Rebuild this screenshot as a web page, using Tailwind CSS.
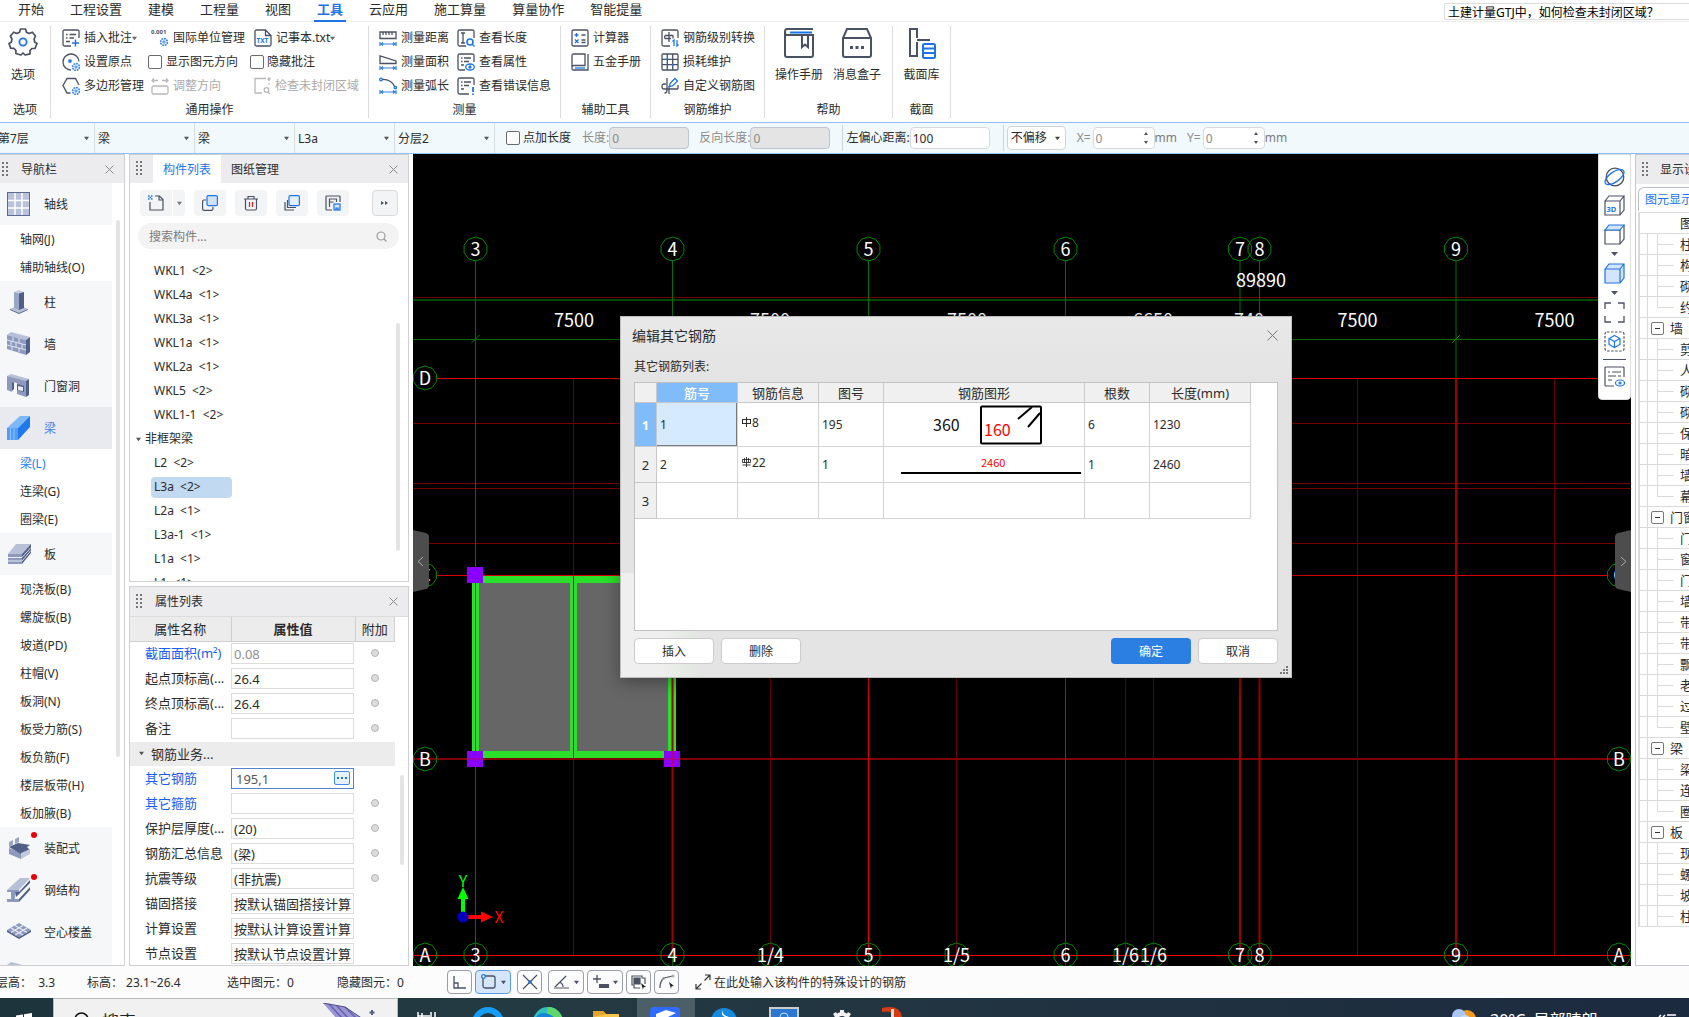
<!DOCTYPE html>
<html lang="zh-CN">
<head>
<meta charset="utf-8">
<title>土建计量</title>
<script src="https://cdn.jsdelivr.net/npm/@tailwindcss/browser@4"></script>
</head>
<body class="flex h-screen w-full flex-col overflow-hidden bg-white font-['Noto_Sans','Noto_Sans_CJK_SC',sans-serif] text-xs leading-4 text-[#2b2b2b]">

<svg class="hidden">
  <defs>
    <g id="cog" fill="none" stroke="#2f80ea" stroke-width="1.2"><circle cx="14" cy="14" r="3.4" stroke-dasharray="1.8 .8" stroke-width="1.6"/><circle cx="14" cy="14" r="1.2" stroke-width="1"/></g>
    <g id="measure" fill="none" stroke="#2f80ea" stroke-width="1.2"><path d="M1 13v4M17 13v4M2 15h14M4 13.5L2 15l2 1.500M14 13.500L16 15l-2 1.500"/></g>
  </defs>
</svg>

<!-- Menu tabs -->
<header class="flex h-[22px] shrink-0 items-start justify-between border-b border-[#ededed]">
  <nav class="flex pl-[5px] text-[13px] leading-[18px]" id="tabs"></nav>
  <label class="mt-[3px] flex"><span class="sr-only">帮助搜索</span>
    <input class="h-[17px] w-[245px] rounded-l-xs border border-r-0 border-[#dcdcdc] pl-[3px] text-xs text-black outline-none" value="土建计量GTJ中，如何检查未封闭区域？"></label>
</header>

<!-- Ribbon -->
<section class="flex h-[100px] shrink-0 whitespace-nowrap pt-1">
  <div class="mb-1 flex w-[51px] flex-col border-r border-[#dcdcdc]">
    <button class="flex h-[72px] shrink-0 flex-col items-center pt-[1px] pr-1">
      <svg class="size-[30px]" viewBox="0 0 30 30" fill="none"><path d="M12.500 2h5l1 3.200 2.600 1.300 3.200-1.300 3.200 3.800-1.400 3 .6 3 2.300 1.500-2 4.800-3.100.2-2 2.200.2 3.100-5 1.200L15 26l-2.100 2-5-1.500v-3l-2-2.200-3.200-.2L1 16.500 3.500 15l.400-3-1.500-3 3.300-3.800 3.200 1.300 2.600-1.300z" stroke="#4a5163" stroke-width="1.700" stroke-linejoin="round"/><circle cx="15" cy="15" r="3.600" stroke="#1d74e8" stroke-width="1.800"/></svg>
      <span class="mt-[10px]">选项</span></button>
    <p class="pt-1 text-center">选项</p>
  </div>

  <div class="mb-1 flex w-[318px] flex-col border-r border-[#dcdcdc]">
    <div class="grid h-[72px] shrink-0 grid-cols-[86px_102px_1fr] grid-rows-3 items-center pl-[11px]">
      <button class="flex items-center gap-1"><svg class="size-[18px]" viewBox="0 0 18 18" fill="none" stroke="#4a5163" stroke-width="1.300"><path d="M17 9V2.500Q17 1 15.500 1h-13Q1 1 1 2.500v13Q1 17 2.500 17H9M4 5.500h1.500M7.500 5.500H14M4 9h1.500M7.500 9H12M4 12.500h4"/><path d="M13.500 10.500v7M10 14h7" stroke="#1d74e8" stroke-width="1.500"/></svg>插入批注<svg class="-ml-1 size-[5px]" viewBox="0 0 6 6"><path d="M0 1h6L3 5z" fill="#666"/></svg></button>
      <button class="flex items-center gap-1 pl-[3px]"><svg class="size-[18px]" viewBox="0 0 18 18"><text x="0" y="5" font-size="6" font-weight="700" fill="#4a5163">0.001</text><use href="#cog" x="-1" y="-1"/></svg>国际单位管理</button>
      <button class="flex items-center gap-1 pl-1"><svg class="size-[18px]" viewBox="0 0 18 18" fill="none" stroke="#4a5163" stroke-width="1.300"><path d="M11.500 1H2.500Q1 1 1 2.500v13Q1 17 2.500 17h13Q17 17 17 15.500V6.500zM11.500 1v5.500H17"/><text x="2.500" y="14" font-size="6.500" font-weight="700" fill="#1d74e8" stroke="none">TXT</text></svg>记事本.txt<svg class="-ml-1 size-[5px]" viewBox="0 0 6 6"><path d="M0 1h6L3 5z" fill="#666"/></svg></button>
      <button class="flex items-center gap-1"><svg class="size-[18px]" viewBox="0 0 18 18" fill="none" stroke="#4a5163" stroke-width="1.300"><path d="M9 17A8 8 0 1 1 17 8.500"/><circle cx="8" cy="8" r="1.200" fill="#1d74e8" stroke="#1d74e8"/><use href="#cog"/></svg>设置原点</button>
      <label class="flex items-center gap-1"><input type="checkbox" class="size-[14px] appearance-none rounded-xs border border-[#6b6b6b] bg-white">显示图元方向</label>
      <label class="flex items-center gap-[3px]"><input type="checkbox" class="size-[14px] appearance-none rounded-xs border border-[#6b6b6b] bg-white">隐藏批注</label>
      <button class="flex items-center gap-1"><svg class="size-[18px]" viewBox="0 0 18 18" fill="none" stroke="#4a5163" stroke-width="1.300"><path d="M8.500 16H5L1 8.500 5 1.500h8.500L17 8"/><use href="#cog"/></svg>多边形管理</button>
      <button class="flex items-center gap-1 pl-[3px] text-[#a9a9a9]" disabled><svg class="size-[18px]" viewBox="0 0 18 18" fill="none" stroke="#b9b9b9" stroke-width="1.300"><path d="M1 3.500h6M3 1.500L1 3.500l2 2M17 3.500h-6M15 1.500l2 2-2 2"/><rect x="1" y="9" width="16" height="8" rx="1.500"/></svg>调整方向</button>
      <button class="flex items-center gap-1 pl-[3px] text-[#a9a9a9]" disabled><svg class="size-[18px]" viewBox="0 0 18 18" fill="none" stroke="#b9b9b9" stroke-width="1.300"><path d="M13 1.500H2V16h7"/><path d="M16 2v7" stroke-dasharray="2 2"/><circle cx="16" cy="1.800" r="1"/><circle cx="13.500" cy="13" r="2.300"/><path d="M15 15l2 2"/></svg>检查未封闭区域</button>
    </div>
    <p class="pt-1 text-center">通用操作</p>
  </div>

  <div class="mb-1 flex w-[192px] flex-col border-r border-[#dcdcdc]">
    <div class="grid h-[72px] shrink-0 grid-cols-[78px_1fr] grid-rows-3 items-center pl-[10px]">
      <button class="flex items-center gap-1"><svg class="size-[18px]" viewBox="0 0 18 18" fill="none" stroke="#4a5163" stroke-width="1.300"><path d="M1 3h16v6.500H1zM4 3v3M7 3v3M10 3v3M13 3v3"/><use href="#measure"/></svg>测量距离</button>
      <button class="flex items-center gap-1"><svg class="size-[18px]" viewBox="0 0 18 18" fill="none" stroke="#4a5163" stroke-width="1.300"><path d="M17 9V2.500Q17 1 15.500 1h-13Q1 1 1 2.500v13Q1 17 2.500 17H9M4 4h4M6 4v10M4 14h4"/><circle cx="13" cy="13" r="3" stroke="#1d74e8" stroke-width="1.600"/><path d="M15 15l2.500 2.500" stroke="#1d74e8"/></svg>查看长度</button>
      <button class="flex items-center gap-1"><svg class="size-[18px]" viewBox="0 0 18 18" fill="none" stroke="#4a5163" stroke-width="1.300"><path d="M1 3v7.500h16V8z"/><use href="#measure"/></svg>测量面积</button>
      <button class="flex items-center gap-1"><svg class="size-[18px]" viewBox="0 0 18 18" fill="none" stroke="#4a5163" stroke-width="1.300"><path d="M17 9V2.500Q17 1 15.500 1h-13Q1 1 1 2.500v13Q1 17 2.500 17H8M4 5h1.500M7 5h7M4 8.500h1.500M7 8.500h5M4 12h3"/><ellipse cx="13" cy="14" rx="4.300" ry="3" stroke="#1d74e8"/><circle cx="13" cy="14" r="1" fill="#1d74e8" stroke="#1d74e8"/></svg>查看属性</button>
      <button class="flex items-center gap-1"><svg class="size-[18px]" viewBox="0 0 18 18" fill="none" stroke="#4a5163" stroke-width="1.300"><path d="M3 2.500Q12 2 16 10"/><circle cx="2" cy="2.500" r="1.300" stroke="#1d74e8"/><circle cx="16.300" cy="10.500" r="1.200" stroke="#1d74e8"/><use href="#measure"/></svg>测量弧长</button>
      <button class="flex items-center gap-1"><svg class="size-[18px]" viewBox="0 0 18 18" fill="none" stroke="#4a5163" stroke-width="1.300"><path d="M17 8V2.500Q17 1 15.500 1h-13Q1 1 1 2.500v13Q1 17 2.500 17H12M4 5h1.500M7 5h7M4 8.500h1.500M7 8.500h5M4 12h3"/><path d="M16 10v5M16 16.500v1.500" stroke="#1d74e8" stroke-width="1.800"/></svg>查看错误信息</button>
    </div>
    <p class="pt-1 text-center">测量</p>
  </div>

  <div class="mb-1 flex w-[90px] flex-col border-r border-[#dcdcdc]">
    <div class="grid h-[72px] shrink-0 grid-rows-3 items-center pl-[10px]">
      <button class="flex items-center gap-1"><svg class="size-[18px]" viewBox="0 0 18 18" fill="none" stroke="#4a5163" stroke-width="1.300"><rect x="1" y="1" width="16" height="16" rx="1.500"/><path d="M10.500 6h4M10.500 11h4M10.500 13.500h4"/><path d="M3.500 6h4M5.500 4v4M4 10.500l3.500 3.500M7.500 10.500L4 14" stroke="#1d74e8"/></svg>计算器</button>
      <button class="flex items-center gap-1"><svg class="size-[18px]" viewBox="0 0 18 18" fill="none" stroke="#4a5163" stroke-width="1.300"><path d="M17 1v16H2.500Q1 17 1 15.500v-13Q1 1 2.500 1H14v11.500H3Q1 12.500 1 14.500"/><path d="M4 15h10" stroke="#1d74e8"/></svg>五金手册</button>
    </div>
    <p class="pt-1 text-center">辅助工具</p>
  </div>

  <div class="mb-1 flex w-[114px] flex-col border-r border-[#dcdcdc]">
    <div class="grid h-[72px] shrink-0 grid-rows-3 items-center pl-[10px]">
      <button class="flex items-center gap-1"><svg class="size-[18px]" viewBox="0 0 18 18" fill="none" stroke="#4a5163" stroke-width="1.300"><path d="M17 9V2.500Q17 1 15.500 1h-13Q1 1 1 2.500v13Q1 17 2.500 17H9"/><path d="M8 3v10M4 6.500h8M4 6.500Q3 8 4 9.500h6M12 6.500v3"/><path d="M13 17v-6l-1.500 1.500M16 11v6l1.500-1.500" stroke="#1d74e8"/></svg>钢筋级别转换</button>
      <button class="flex items-center gap-1"><svg class="size-[18px]" viewBox="0 0 18 18" fill="none" stroke="#4a5163" stroke-width="1.300"><rect x="1" y="1" width="16" height="16" rx="1"/><path d="M6.300 1v16M11.700 1v16M1 6.300h16M1 11.700h16"/><path d="M6.300 5.300v2M5.300 6.300h2M11.700 10.700v2M10.700 11.700h2" stroke="#1d74e8" stroke-width="1.600"/></svg>损耗维护</button>
      <button class="flex items-center gap-1"><svg class="size-[18px]" viewBox="0 0 18 18" fill="none" stroke="#4a5163" stroke-width="1.300"><path d="M6 1v12Q6 16 3.500 16M5 7H3Q1 7 1 9.500T3 12h14M8 17V9M17 8v4"/><path d="M8.500 9.500l.5-3L14 1.500l2.500 2.500-5 5z" stroke="#1d74e8"/></svg>自定义钢筋图</button>
    </div>
    <p class="pt-1 text-center">钢筋维护</p>
  </div>

  <div class="mb-1 flex w-[128px] flex-col border-r border-[#dcdcdc]">
    <div class="flex h-[72px] shrink-0 gap-[10px] pl-[10px]">
      <button class="flex w-12 flex-col items-center pt-[1px]"><svg class="size-8" viewBox="0 0 32 32" fill="none" stroke="#4a5163" stroke-width="2"><path d="M30 2H4Q2 2 2 5t2 3h26v20q0 2-2 2H4q-2 0-2-2V5M19 8v12l3-2.500 3 2.500V8"/><path d="M7 5.500h22" stroke="#1d74e8"/></svg><span class="mt-2">操作手册</span></button>
      <button class="flex w-12 flex-col items-center pt-[1px]"><svg class="size-8" viewBox="0 0 32 32" fill="none" stroke="#4a5163" stroke-width="2"><path d="M2 11L6 2h20l4 9v17q0 2-2 2H4q-2 0-2-2zM2 11h28"/><path d="M9 20.500h3M14.500 20.500h3M20 20.500h3" stroke-width="3"/></svg><span class="mt-2">消息盒子</span></button>
    </div>
    <p class="pt-1 text-center">帮助</p>
  </div>

  <div class="mb-1 flex w-[58px] flex-col border-r border-[#dcdcdc]">
    <button class="flex h-[72px] shrink-0 flex-col items-center pt-[1px]"><svg class="size-8" viewBox="0 0 32 32" fill="none" stroke="#4a5163" stroke-width="2"><path d="M11 11V2H4v27h7V15M11 13h13"/><rect x="17" y="17" width="12" height="14" rx="1.500" stroke="#1d74e8"/><path d="M17 21.500h12M17 26h12" stroke="#1d74e8"/></svg><span class="mt-2">截面库</span></button>
    <p class="pt-1 text-center">截面</p>
  </div>
</section>

<!-- Context bar -->
<section class="flex h-8 shrink-0 items-center whitespace-nowrap border-y border-[#8fbffa] bg-[#f2f9fd] text-xs">
  <div id="combos" class="flex h-full"></div>
  <label class="ml-[11px] flex items-center gap-[3px]"><input type="checkbox" class="size-[14px] appearance-none rounded-xs border border-[#6b6b6b] bg-white">点加长度</label>
  <label class="ml-[11px] flex items-center text-[#8b8b8b]">长度:<input disabled value="0" class="h-[22px] w-20 rounded-sm border border-[#bcc4cf] bg-[#e4e4e4] pl-[2px]"></label>
  <label class="ml-[10px] flex items-center text-[#8b8b8b]">反向长度:<input disabled value="0" class="h-[22px] w-20 rounded-sm border border-[#bcc4cf] bg-[#e4e4e4] pl-[2px]"></label>
  <span class="ml-3 h-[26px] w-px bg-[#cdd5da]"></span>
  <label class="ml-[3px] flex items-center">左偏心距离:<input value="100" class="h-[22px] w-20 rounded-sm border border-[#d9d9d9] bg-white pl-[2px]"></label>
  <span class="ml-[13px] h-[26px] w-px bg-[#cdd5da]"></span>
  <div class="relative ml-[3px] flex items-center">
    <select aria-label="偏移方式" class="h-6 w-[59px] appearance-none rounded-sm border border-[#d4d4d4] bg-white pl-[3px]"><option>不偏移</option></select>
    <svg class="pointer-events-none absolute right-[6px] size-[5px]" viewBox="0 0 6 6"><path d="M0 1h6L3 5z" fill="#444"/></svg>
  </div>
  <label class="ml-[11px] flex items-center gap-[2px] text-[#8b8b8b]">X=<input disabled value="0" class="h-[22px] w-[62px] rounded-sm border border-[#d9d9d9] bg-white pl-[2px]"></label>
  <svg class="-ml-3 mr-[6px] h-3 w-[6px]" viewBox="0 0 6 12"><path d="M1 3l2-3 2 3zM1 9h4l-2 3z" fill="#4a5163"/></svg><span class="text-[#7b7b7b]">mm</span>
  <label class="ml-[10px] flex items-center gap-[2px] text-[#8b8b8b]">Y=<input disabled value="0" class="h-[22px] w-[62px] rounded-sm border border-[#d9d9d9] bg-white pl-[2px]"></label>
  <svg class="-ml-3 mr-[6px] h-3 w-[6px]" viewBox="0 0 6 12"><path d="M1 3l2-3 2 3zM1 9h4l-2 3z" fill="#4a5163"/></svg><span class="text-[#7b7b7b]">mm</span>
</section>

<main class="relative flex min-h-0 flex-1">
  <!-- Navigation -->
  <aside class="relative flex w-[125px] shrink-0 flex-col overflow-hidden border-y border-r border-[#d0d0d0] bg-white">
    <h2 class="flex h-7 shrink-0 items-center bg-[#ececef] pl-[2px] pt-px">
      <svg class="h-4 w-[6px]" viewBox="0 0 6 16" fill="#777"><path d="M0 0h2v2H0zM4 0h2v2H4zM0 4h2v2H0zM4 4h2v2H4zM0 8h2v2H0zM4 8h2v2H4zM0 12h2v2H0zM4 12h2v2H4z"/></svg>
      <span class="ml-[13px] flex-1">导航栏</span>
      <button aria-label="关闭" class="mr-[10px]"><svg class="size-[9px]" viewBox="0 0 9 9" stroke="#8a8a8a"><path d="M.5.5l8 8M8.500.5l-8 8"/></svg></button>
    </h2>
    <ul id="nav" class="w-28"></ul>
    <div class="absolute left-[116px] top-[65px] h-[537px] w-1 rounded-full bg-[#e4e4e4]"></div>
  </aside>

  <div class="ml-1 flex w-[280px] shrink-0 flex-col gap-1">
    <!-- Component list -->
    <section class="relative flex h-[428px] flex-col overflow-hidden border border-[#d0d0d0]">
      <div class="flex h-7 shrink-0 items-center bg-[#ececef] pl-[6px]">
        <svg class="h-4 w-[6px]" viewBox="0 0 6 16" fill="#777"><path d="M0 0h2v2H0zM4 0h2v2H4zM0 4h2v2H0zM4 4h2v2H4zM0 8h2v2H0zM4 8h2v2H4zM0 12h2v2H0zM4 12h2v2H4z"/></svg>
        <button class="ml-[11px] h-full w-[68px] bg-white pt-[2px] text-[#1d74e8]">构件列表</button>
        <button class="ml-[10px] pt-[2px]">图纸管理</button>
        <button aria-label="关闭" class="ml-auto mr-[10px]"><svg class="size-[9px]" viewBox="0 0 9 9" stroke="#8a8a8a"><path d="M.5.5l8 8M8.500.5l-8 8"/></svg></button>
      </div>
      <div class="mt-[7px] flex h-[26px] shrink-0 pl-[10px]">
        <button aria-label="新建" class="grid w-8 place-items-center rounded-l-sm bg-[#f3f4f5]"><svg class="size-4" viewBox="0 0 16 16" fill="none" stroke="#4a5163" stroke-width="1.200"><path d="M7 1h4.500L15 4.500V15H2V7M11 1v4h4"/><path d="M0 1h1.500M3 1h1.500M1.500 2.500H3M0 4h1.500M3 4h1.500" stroke="#1d74e8" stroke-width="1.500"/></svg></button>
        <button aria-label="新建选项" class="ml-px grid w-3 place-items-center rounded-r-sm bg-[#f3f4f5]"><svg class="size-[5px]" viewBox="0 0 6 6"><path d="M0 1h6L3 5z" fill="#777"/></svg></button>
        <button aria-label="复制" class="ml-[9px] grid w-8 place-items-center rounded-sm bg-[#f3f4f5]"><svg class="size-4" viewBox="0 0 16 16" stroke-width="1.200"><path d="M4 5H2Q.6 5 .6 6.500V14q0 1.400 1.400 1.400h7.500q1.400 0 1.400-1.400v-2" fill="none" stroke="#4a5163"/><rect x="5" y=".6" width="10.400" height="10" rx="1.400" fill="#cfe2fa" stroke="#1d74e8"/></svg></button>
        <button aria-label="删除构件" class="ml-[9px] grid w-8 place-items-center rounded-sm bg-[#f3f4f5]"><svg class="size-4" viewBox="0 0 16 16" fill="none" stroke="#4a5163" stroke-width="1.200"><path d="M1 4h14M5 4V1.500h6V4M2.500 4v9.500q0 1.500 1.500 1.500h8q1.500 0 1.500-1.500V4"/><path d="M6.500 7v5M9.500 7v5" stroke="#e02020"/></svg></button>
        <button aria-label="层间复制" class="ml-[9px] grid w-8 place-items-center rounded-sm bg-[#f3f4f5]"><svg class="size-4" viewBox="0 0 16 16" fill="none" stroke="#4a5163" stroke-width="1.200"><path d="M1 7v8h9M3.500 5v7.500H12"/><rect x="5" y=".6" width="10.400" height="10" rx="1.400" fill="#e4effd" stroke="#1d74e8"/></svg></button>
        <button aria-label="构件存档" class="ml-[9px] grid w-8 place-items-center rounded-sm bg-[#f3f4f5]"><svg class="size-4" viewBox="0 0 16 16" fill="none" stroke="#4a5163" stroke-width="1.200"><path d="M15 7V2Q15 1 14 1H2Q1 1 1 2v12q0 1 1 1h5M4.500 12V4h7v3M4.500 7h4"/><rect x="9" y="9" width="6" height="6" fill="#d9e8fb" stroke="#1d74e8"/><path d="M11 15v-2h2v2" stroke="#1d74e8"/></svg></button>
        <button aria-label="更多" class="ml-[23px] grid w-[26px] place-items-center rounded-sm border border-[#dadada] bg-[#f3f4f5]"><svg class="h-[6px] w-2" viewBox="0 0 8 6"><path d="M0 1l3 2-3 2zM4 1l3 2-3 2z" fill="#4a5163"/></svg></button>
      </div>
      <label class="relative ml-2 mt-[7px] flex w-[261px] shrink-0 items-center">
        <input placeholder="搜索构件..." class="h-[26px] w-full rounded-full bg-[#f3f3f3] pl-[11px] placeholder:text-[#7b7b7b]">
        <svg class="absolute right-3 size-[11px]" viewBox="0 0 11 11" fill="none" stroke="#9b9b9b" stroke-width="1.200"><circle cx="5" cy="5" r="4"/><path d="M8 8l2.500 2.500"/></svg>
      </label>
      <ul id="components" class="mt-[10px] whitespace-pre"></ul>
      <div class="absolute left-[266px] top-[168px] h-[228px] w-1 rounded-full bg-[#e4e4e4]"></div>
    </section>

    <!-- Properties -->
    <section class="relative min-h-0 flex-1 overflow-hidden border border-[#d0d0d0]">
      <h2 class="flex h-[30px] items-center border-b border-[#dcdcdc] bg-[#ececef] pl-[6px]">
        <svg class="h-4 w-[6px]" viewBox="0 0 6 16" fill="#777"><path d="M0 0h2v2H0zM4 0h2v2H4zM0 4h2v2H0zM4 4h2v2H4zM0 8h2v2H0zM4 8h2v2H4zM0 12h2v2H0zM4 12h2v2H4z"/></svg>
        <span class="ml-[13px] flex-1">属性列表</span>
        <button aria-label="关闭" class="mr-[10px]"><svg class="size-[9px]" viewBox="0 0 9 9" stroke="#8a8a8a"><path d="M.5.5l8 8M8.500.5l-8 8"/></svg></button>
      </h2>
      <table class="w-[265px] table-fixed text-[13px]">
        <thead><tr class="h-6 bg-[#ececec] [&>th]:border-b [&>th]:border-r [&>th]:border-[#d0d0d0] [&>th]:p-0">
          <th class="w-[101px] font-normal">属性名称</th><th class="w-[124px]">属性值</th><th class="font-normal">附加</th></tr></thead>
        <tbody id="props"></tbody>
      </table>
      <div class="absolute left-[270px] top-[188px] h-[90px] w-1 rounded-full bg-[#e4e4e4]"></div>
    </section>
  </div>

  <!-- Drawing canvas -->
  <section class="relative ml-1 min-w-0 flex-1 overflow-hidden bg-black">
    <svg class="absolute inset-0 size-full font-['Noto_Sans_CJK_SC',sans-serif]"><g id="plan" transform="translate(-413 -154)"></g></svg>
    <button aria-label="收起左侧" class="absolute left-0 top-[376px]"><svg class="h-[62px] w-4" viewBox="0 0 16 62"><path d="M0 0l13 3q3 1 3 4v48q0 3-3 4L0 62z" fill="#4d4d4d"/><path d="M10 27l-5 4.500 5 4.500" fill="none" stroke="#aaa"/></svg></button>
    <button aria-label="收起右侧" class="absolute right-0 top-[376px]"><svg class="h-[62px] w-4" viewBox="0 0 16 62"><path d="M16 0L3 3Q0 4 0 7v48q0 3 3 4l13 3z" fill="#4d4d4d"/><path d="M6 27l5 4.500-5 4.500" fill="none" stroke="#aaa"/></svg></button>

    <div class="absolute right-0 top-0 flex h-[246px] w-[33px] flex-col items-center rounded-b-sm border border-[#ddd] bg-white pr-px pt-3">
      <button aria-label="动态观察"><svg class="size-[21px]" viewBox="0 0 21 21" fill="none" stroke-width="1.300"><circle cx="11" cy="10" r="8.800" stroke="#4a5163"/><ellipse cx="10.500" cy="10" rx="11" ry="5" transform="rotate(-35 10.500 10)" stroke="#1d74e8"/></svg></button>
      <button aria-label="三维" class="mt-[7px]"><svg class="size-[21px]" viewBox="0 0 21 21" fill="none" stroke="#4a5163" stroke-width="1.200"><path d="M1 6h15v14H1zM1 6l4-5h15l-4 5M20 1v14l-4 5"/><text x="2.500" y="17" font-size="7.500" font-weight="700" fill="#1d74e8" stroke="none">3D</text></svg></button>
      <button aria-label="俯视" class="mt-2"><svg class="size-[21px]" viewBox="0 0 21 21" fill="none" stroke="#4a5163" stroke-width="1.200"><path d="M1 6h15v14H1zM20 1v14l-4 5"/><path d="M1 6l4-5h15l-4 5z" stroke="#1d74e8" fill="#d4e5fb"/></svg></button>
      <svg class="mt-[7px] h-1 w-[7px]" viewBox="0 0 7 4"><path d="M0 0h7L3.500 4z" fill="#4a5163"/></svg>
      <button aria-label="实体" class="mt-[7px]"><svg class="size-[21px]" viewBox="0 0 21 21" fill="#d4e5fb" stroke="#1d74e8" stroke-width="1.200"><path d="M1 6l4-5h15v14l-4 5H1zM1 6h15v14M16 6l4-5"/></svg></button>
      <svg class="mt-[7px] h-1 w-[7px]" viewBox="0 0 7 4"><path d="M0 0h7L3.500 4z" fill="#4a5163"/></svg>
      <button aria-label="全屏" class="mt-[7px]"><svg class="size-[21px]" viewBox="0 0 21 21" fill="none" stroke="#4a5163" stroke-width="1.300"><path d="M1 7V1h6M14 1h6v6M20 14v6h-6M7 20H1v-6"/></svg></button>
      <button aria-label="局部三维" class="mt-2"><svg class="size-[21px]" viewBox="0 0 21 21" fill="none" stroke-width="1.200"><rect x="1" y="1" width="19" height="19" rx="2" stroke="#4a5163" stroke-dasharray="2.500 1.500"/><path d="M10.500 4.500l5.500 3v6l-5.500 3-5.500-3v-6zM5 7.500l5.500 3 5.500-3M10.500 10.500v6" stroke="#1d74e8"/></svg></button>
      <span class="mt-[7px] h-px w-[23px] shrink-0 bg-[#4a5163]"></span>
      <button aria-label="显示设置" class="mt-[6px]"><svg class="size-[21px]" viewBox="0 0 21 21" fill="none" stroke="#4a5163" stroke-width="1.200"><path d="M20 11V2q0-1-1-1H2Q1 1 1 2v17q0 1 1 1h8M4 6h2M8 6h9M4 10h8M14 10h3M4 14h4"/><ellipse cx="16" cy="17" rx="4.500" ry="3" stroke="#1d74e8"/><circle cx="16" cy="17" r="1" stroke="#1d74e8"/></svg></button>
    </div>
  </section>

  <!-- Display settings -->
  <aside class="ml-1 w-[54px] shrink-0 overflow-hidden whitespace-nowrap border-y border-l border-[#c4c7cf]">
    <h2 class="flex h-[29px] w-[200px] items-center bg-[#ececef] pl-[6px]">
      <svg class="h-4 w-[6px]" viewBox="0 0 6 16" fill="#777"><path d="M0 0h2v2H0zM4 0h2v2H4zM0 4h2v2H0zM4 4h2v2H4zM0 8h2v2H0zM4 8h2v2H4zM0 12h2v2H0zM4 12h2v2H4z"/></svg>
      <span class="ml-3 pt-px">显示设置</span></h2>
    <button class="ml-[2px] mt-[3px] flex h-6 w-[100px] items-center rounded-tl-md border-l border-t border-[#b8bcc6] pl-[6px] text-[#1d74e8]">图元显示</button>
    <ul id="layers" class="ml-[2px] mt-px w-[200px] border-l-2 border-[#dadada] text-[13px]"></ul>
  </aside>

  <!-- Dialog over the canvas -->
  <section role="dialog" aria-labelledby="dlg-title" class="absolute left-[620px] top-[162px] flex w-[672px] flex-col border border-[#bdbdbd] bg-[linear-gradient(180deg,#e8e8e8,#e3e3e3_20%,#e4e4e4)] px-[13px] shadow-[0_4px_16px_rgba(0,0,0,0.35)]">
    <div class="absolute bottom-0 left-0 h-[104px] w-20 bg-[linear-gradient(90deg,#efefef_50%,#e6ece4_75%,#e4e4e4)]"></div>
    <header class="relative flex h-[37px] items-center justify-between">
      <h2 id="dlg-title" class="-ml-[2px] text-sm leading-5">编辑其它钢筋</h2>
      <button aria-label="关闭对话框"><svg class="size-[11px]" viewBox="0 0 11 11" stroke="#777"><path d="M.5.5l10 10M10.500.5l-10 10"/></svg></button>
    </header>
    <p class="relative flex h-7 items-center pb-[2px]">其它钢筋列表:</p>
    <div class="relative h-[249px] border border-[#c2c2c2] bg-white">
      <table class="w-[616px] table-fixed border-separate border-spacing-0 [&_td]:border-b [&_td]:border-r [&_td]:border-[#d4d4d4] [&_td]:px-[3px] [&_td]:py-0 [&_th]:border-b [&_th]:border-r [&_th]:border-[#c8c8c8] [&_th]:bg-[#f0f0f0] [&_th]:p-0 [&_th]:font-normal">
        <thead><tr class="h-5 text-[13px]"><th class="w-[22px]"></th><th class="w-[81px] bg-[#80bbfa]! text-white"><span class="font-medium">筋号</span></th><th class="w-[81px]">钢筋信息</th><th class="w-[65px]">图号</th><th class="w-[201px]">钢筋图形</th><th class="w-[65px]">根数</th><th class="w-[101px]">长度(mm)</th></tr></thead>
        <tbody>
          <tr class="h-11"><th class="bg-[#80bbfa]! text-[13px] text-white"><strong>1</strong></th>
            <td class="bg-[#d5e9ff] shadow-[inset_-1px_-1px_0_#7a7a7a]">1</td>
            <td><span class="flex items-center pb-1 pl-px"><svg class="mb-[2px] size-[10px]" viewBox="0 0 10 10" fill="none" stroke="#2b2b2b"><rect x=".5" y="2.500" width="8" height="4"/><path d="M4.500 0v10"/></svg>8</span></td>
            <td>195</td>
            <td><svg class="h-[42px] w-[194px] font-['Noto_Sans_CJK_SC',sans-serif]" viewBox="0 0 194 42"><text x="46" y="27" font-size="16" fill="#111">360</text><rect x="94" y="2.500" width="60" height="37" rx="1" fill="none" stroke="#000" stroke-width="2"/><path d="M131 15l14-12M141 23l12-14" stroke="#000" stroke-width="2"/><text x="97" y="32" font-size="16" fill="#f00">160</text></svg></td>
            <td>6</td><td>1230</td></tr>
          <tr class="h-9"><th class="text-[13px]">2</th><td>2</td>
            <td><span class="flex items-center pb-1 pl-px"><svg class="mb-[2px] size-[10px]" viewBox="0 0 10 10" fill="none" stroke="#2b2b2b"><path d="M.5 2.500h8v3h-8zM4.500 0v10M2.500 1v5M6.500 1v5M.5 8h8" stroke-width=".9"/></svg>22</span></td>
            <td>1</td>
            <td><svg class="h-[34px] w-[194px] font-['Noto_Sans_CJK_SC',sans-serif]" viewBox="0 0 194 34"><text x="94" y="19" font-size="11" fill="#f00">2460</text><path d="M14 25h180" stroke="#000" stroke-width="2"/></svg></td>
            <td>1</td><td>2460</td></tr>
          <tr class="h-9"><th class="text-[13px]">3</th><td></td><td></td><td></td><td></td><td></td><td></td></tr>
        </tbody>
      </table>
    </div>
    <footer class="relative flex h-[46px] gap-[7px] pt-[7px] pb-[13px]">
      <button class="w-20 rounded-sm border border-[#cbcbcb] bg-white pt-px">插入</button>
      <button class="w-20 rounded-sm border border-[#cbcbcb] bg-white pt-px">删除</button>
      <button class="ml-auto w-20 rounded-sm bg-[#2b7fe3] pt-px text-white">确定</button>
      <button class="w-20 rounded-sm border border-[#cbcbcb] bg-white pt-px">取消</button>
      <svg class="absolute -right-[10px] bottom-[3px] size-2" viewBox="0 0 8 8" fill="#777"><path d="M6 0h2v2H6zM3 3h2v2H3zM6 3h2v2H6zM0 6h2v2H0zM3 6h2v2H3zM6 6h2v2H6z"/></svg>
    </footer>
  </section>
</main>

<!-- Status bar -->
<section class="flex h-8 shrink-0 items-center whitespace-nowrap bg-[#fcfcfc]">
  <div class="-ml-1 flex w-[451px] items-center pt-px">
    <span class="w-[91px]">层高：&nbsp;&nbsp;3.3</span><span class="w-[140px]">标高：&nbsp;23.1~26.4</span><span class="w-[110px]">选中图元：0</span><span>隐藏图元：0</span>
  </div>
  <button aria-label="正交" class="grid h-6 w-[25px] place-items-center rounded-sm border border-[#9a9ea8]"><svg class="size-4" viewBox="0 0 16 16" fill="none" stroke="#4a5163" stroke-width="1.300"><path d="M2 2v12h12M2 9h4v5"/></svg></button>
  <button aria-label="捕捉" class="ml-[3px] flex h-6 w-9 items-center justify-center gap-1 rounded-sm border border-[#5a9bf0] bg-[#d5e6fb]"><svg class="size-4" viewBox="0 0 16 16" fill="none" stroke="#4a5163" stroke-width="1.300"><rect x="2" y="2" width="12" height="12" rx="2"/><circle cx="2.500" cy="2.500" r="1.800" fill="#fff" stroke="#1d74e8"/></svg><svg class="size-[5px]" viewBox="0 0 6 6"><path d="M0 1h6L3 5z" fill="#4a5163"/></svg></button>
  <button aria-label="交点" class="ml-[6px] grid h-6 w-[25px] place-items-center rounded-sm border border-[#9a9ea8]"><svg class="size-4" viewBox="0 0 16 16" fill="none" stroke="#4a5163" stroke-width="1.200"><path d="M1 1l14 14M15 1L1 15"/><circle cx="8" cy="8" r="1.200" stroke="#1d74e8"/></svg></button>
  <button aria-label="角度" class="ml-[6px] flex h-6 w-9 items-center justify-center gap-1 rounded-sm border border-[#9a9ea8]"><svg class="size-4" viewBox="0 0 16 16" fill="none" stroke="#4a5163" stroke-width="1.300"><path d="M1 13L12 2M6 8q3 2 3 5"/><path d="M0 14h15" stroke="#aaa" stroke-width="2"/></svg><svg class="size-[5px]" viewBox="0 0 6 6"><path d="M0 1h6L3 5z" fill="#4a5163"/></svg></button>
  <button aria-label="动态输入" class="ml-[3px] flex h-6 w-9 items-center justify-center gap-1 rounded-sm border border-[#9a9ea8]"><svg class="size-4" viewBox="0 0 16 16" fill="none" stroke="#4a5163" stroke-width="1.300"><path d="M0 5h8M4 1v8"/><path d="M6 10h10v4H6z" fill="#4a5163" stroke="none"/></svg><svg class="size-[5px]" viewBox="0 0 6 6"><path d="M0 1h6L3 5z" fill="#4a5163"/></svg></button>
  <button aria-label="选择" class="ml-[3px] grid h-6 w-[25px] place-items-center rounded-sm border border-[#9a9ea8]"><svg class="size-4" viewBox="0 0 16 16" fill="none" stroke="#4a5163" stroke-width="1.200"><path d="M9 14H3V11H1V2h10v2h3v6"/><path d="M3 4h6v6H3z" fill="#4a5163"/><path d="M10 9l5 4-2.500.3L12 16z" fill="#222" stroke="none"/></svg></button>
  <button aria-label="折线" class="ml-[3px] grid h-6 w-[25px] place-items-center rounded-sm border border-[#9a9ea8]"><svg class="size-4" viewBox="0 0 16 16" fill="none" stroke="#4a5163" stroke-width="1.200"><path d="M1 14Q1 7 5 4l9-2"/><circle cx="14" cy="2" r="1" stroke="#aaa"/><circle cx="4.500" cy="4.500" r="1" stroke="#aaa"/><path d="M10 8l5 4-2.500.3L12 15z" fill="#222" stroke="none"/></svg></button>
  <svg class="ml-4 size-4" viewBox="0 0 16 16" fill="none" stroke="#333" stroke-width="1.200"><path d="M9.500 6.500L15 1M10 1h5v5M6.500 9.500L1 15M1 10v5h5"/></svg>
  <p class="ml-[3px] pt-px">在此处输入该构件的特殊设计的钢筋</p>
</section>

<!-- Desktop taskbar -->
<footer class="relative flex h-[19px] shrink-0 items-start overflow-hidden bg-[linear-gradient(90deg,#1e343c,#243a42_30%,#1c2a3f)]">
  <button aria-label="开始" class="w-[53px] shrink-0 pt-[15px] pl-4"><svg class="h-4 w-4" viewBox="0 0 16 16" fill="#fff"><path d="M0 2.500L7 1.500V16H0zM8 1.300L16 0v16H8z"/></svg></button>
  <label class="relative flex h-10 w-[345px] shrink-0 items-start border border-[#bbb] bg-[#f1f1f1] pl-5 pt-[13px]">
    <svg class="size-4" viewBox="0 0 16 16" fill="none" stroke="#111" stroke-width="1.500"><circle cx="7.500" cy="7.500" r="6.500"/></svg>
    <input placeholder="搜索" class="-mt-[2px] ml-3 h-6 w-40 text-[17px] leading-6 placeholder:text-[#222]">
    <svg class="absolute right-5 top-1 h-4 w-14" viewBox="0 0 56 16"><path d="M2 0l22 4 18 12H16z" fill="#9a96d4"/><path d="M8 1l14 15M16 3l12 13M24 4l12 12" stroke="#6561ac" stroke-width="1.500"/><path d="M2 0l22 4 18 12" fill="none" stroke="#4f4b8e"/><path d="M51 7v5M48.500 9.500h5" stroke="#55618a" stroke-width="2"/></svg>
  </label>
  <svg class="h-[19px] w-[640px] shrink-0" viewBox="0 0 640 19">
    <rect x="239" width="58" height="19" fill="#4d5f66"/>
    <path d="M20 14v5M20 18h12M37 14v5M24 19v-4M33 19v-5" stroke="#fff" stroke-width="1.500" fill="none"/>
    <circle cx="90" cy="25" r="13" fill="none" stroke="#159cf5" stroke-width="6"/>
    <circle cx="150" cy="24" r="15" fill="#2fc0c0"/><path d="M150 9a15 15 0 0 1 15 15h-18z" fill="#5fd66b"/><path d="M138 19q6-8 18 0z" fill="#1884d8"/>
    <path d="M195 19v-6h10l3 3h13v3z" fill="#f7c44a"/><path d="M195 19v-6h10l3 3z" fill="#e5a42c"/>
    <rect x="252" y="9" width="30" height="20" rx="4" fill="#2f6bff"/><path d="M258 16l10-4 10 3-8 4h-12z" fill="#fff"/>
    <circle cx="326" cy="23" r="13" fill="#1489dd"/><path d="M325 12q-2 5 6 7h-4q-5-2-2-7z" fill="#fff"/>
    <rect x="372" y="10" width="28" height="14" fill="#2c78cf" stroke="#ccc" stroke-width="2"/><circle cx="386" cy="19" r="4" fill="none" stroke="#bcdcff"/>
    <circle cx="444" cy="22" r="6" fill="none" stroke="#f2f2f2" stroke-width="4"/><path d="M442 12h4v4h-4zM435 16l3-2 2 3-3 2zM453 16l-3-2-2 3 3 2z" fill="#f2f2f2"/>
    <path d="M484 10q18-4 20 9h-8q-2-7-12-5z" fill="#d83b11"/><path d="M493 11h3v8h-3z" fill="#ddd"/>
  </svg>
  <div class="ml-auto mr-[11px] flex shrink-0 items-start text-base text-white">
    <svg class="mt-[10px] h-4 w-8" viewBox="0 0 32 16"><circle cx="17" cy="11" r="9" fill="#f39a1e"/><circle cx="9" cy="8" r="7" fill="#a9c6f5"/><circle cx="15" cy="13" r="6" fill="#c5daf9"/></svg>
    <span class="ml-2 w-[168px] whitespace-nowrap pt-3 leading-5">30°C&nbsp;&nbsp;局部晴朗</span>
    <svg class="mt-4 h-2 w-5" viewBox="0 0 20 8" stroke="#fff" stroke-width="1.500"><path d="M1 3l2-2M5 3l2-2M9 1h9"/></svg>
  </div>
</footer>

<script>
const $ = id => document.getElementById(id);
const caret = '<svg class="size-[5px]" viewBox="0 0 6 6"><path d="M0 1h6L3 5z" fill="#555"/></svg>';

$('tabs').innerHTML = ['开始','工程设置','建模','工程量','视图','工具','云应用','施工算量','算量协作','智能提量'].map(t =>
  `<a href="#" class="h-[22px] ${t === '工具' ? 'mx-[10px] border-b-2 border-[#1d74e8] px-[3px] font-bold text-[#1d74e8]' : 'mx-[3px] px-[10px]'}">${t}</a>`).join('');

$('combos').innerHTML = [['楼层','第7层'],['类别','梁'],['构件类型','梁'],['构件','L3a'],['分层','分层2']].map(([l, v], i) =>
  `<div class="relative flex items-center border-r border-[#d5dde2] ${i ? 'w-[100px]' : 'w-[95px]'}"><select aria-label="${l}" class="h-full w-full appearance-none bg-transparent pt-px ${i ? 'pl-[3px]' : '-ml-[2px]'}"><option>${v}</option></select><span class="pointer-events-none absolute right-[5px]">${caret}</span></div>`).join('');

const art = {
  grid: '<path d="M0 0h23v24H0z" fill="#5b6c94"/><path d="M1 1h21v22H1z" fill="#b9c2da"/><path d="M8 1v22M15 1v22M1 8.500h21M1 16h21" stroke="#fff" stroke-width="1.500"/>',
  column: '<path d="M3 19l9-4 9 4-9 5z" fill="#b7c0d6"/><path d="M3 19l9 4 9-4v1l-9 4-9-4z" fill="#5b6c94"/><path d="M7 2h5v18l-5-2z" fill="#9aa6c6"/><path d="M12 2h5v16l-5 2z" fill="#4f5f88"/><path d="M7 2l5-2 5 2-5 1.500z" fill="#c5cde0"/>',
  wall: '<path d="M0 3l4-3 19 5-4 3z" fill="#b7c0d6"/><path d="M0 3l19 5v15L0 17z" fill="#8d9abd"/><path d="M19 8l4-3v15l-4 3z" fill="#4f5f88"/><path d="M0 8l19 5M0 13l19 5M6 5v4M12 6v5M9 11v4M15 12v5M5 14v4M12 16v4M4 9v4" stroke="#dfe4ef"/>',
  opening: '<path d="M0 2l4-2 18 5-3 3z" fill="#b7c0d6"/><path d="M0 2l19 5v16l-9-3V9L5 8v10l-5-2z" fill="#8d9abd"/><path d="M19 7l3-2v16l-3 2zM5 8l2 .5V15l-2 2z" fill="#4f5f88"/><path d="M10 10l7 2v6l-7-2z" fill="#4f5f88"/><path d="M11 12l5 1v4l-5-1z" fill="#e8ebf3"/>',
  beam: '<path d="M0 12L13 0h10L11 12z" fill="#7db8f7"/><path d="M11 12L23 0v11L11 24z" fill="#1f78ee"/><path d="M0 12h11v12H0z" fill="#4f9df5"/><path d="M3.500 12v12M7 12v12" stroke="#8fc2fa"/>',
  slab: '<path d="M1 12L9 2h15l-9 10z" fill="#b7c0d6"/><path d="M1 12h14v10H1z" fill="#8d9abd"/><path d="M15 12l9-10v9l-9 11z" fill="#4f5f88"/><path d="M1 15.500h14l9-10M1 19h14l9-10.500" stroke="#fff" fill="none" stroke-width=".8"/>',
  prefab: '<path d="M2 12l12 5v6L2 18z" fill="#8d9abd"/><path d="M2 11l9-4 12 2-3 2 3 3-9 4z" fill="#4f5f88"/><path d="M2 6l4-2v5l-4 2zM8 3l4-2v5l-4 2z" fill="#9aa6c6"/><path d="M14 17l9-4v5l-9 5z" fill="#c0c8dc"/>',
  steel: '<path d="M0 12L13 0h10L12 12z" fill="#b7c0d6"/><path d="M0 12h12v2H8v7h4v3H0v-3h4v-7H0z" fill="#8d9abd"/><path d="M8 14h4L23 2v3L9 19zM12 21L23 9v3L12 24z" fill="#4f5f88"/>',
  hollow: '<path d="M0 10l12-7 12 7-12 7z" fill="#8d9abd"/><path d="M0 10v2l12 7 12-7v-2l-12 7z" fill="#4f5f88"/><path d="M4 8l12 7M8 5.500l12 7M20 8L8 15M16 5.500L4 12.500" stroke="#e8ebf3" stroke-width="1.300"/>',
};
const nav = [['轴线','grid'],'轴网(J)','辅助轴线(O)',['柱','column'],['墙','wall'],['门窗洞','opening'],['梁','beam'],'梁(L)','连梁(G)','圈梁(E)',['板','slab'],
  '现浇板(B)','螺旋板(B)','坡道(PD)','柱帽(V)','板洞(N)','板受力筋(S)','板负筋(F)','楼层板带(H)','板加腋(B)',['装配式','prefab',1],['钢结构','steel',1],['空心楼盖','hollow'],['','wall']];
$('nav').innerHTML = nav.map(n => typeof n === 'string'
  ? `<li><a href="#" class="flex h-7 items-center pl-5 pt-[2px] ${n === '梁(L)' ? 'text-[#1d80f0]' : ''}">${n}</a></li>`
  : `<li><a href="#" class="relative flex h-[42px] items-center pl-[7px] ${n[0] === '梁' ? 'bg-[#e8eaef] text-[#3d82e8]' : 'bg-[#f5f7f9]'}"><svg class="mr-[13px] h-6 w-6" viewBox="0 0 24 24">${art[n[1]]}</svg><span class="pt-[2px]">${n[0]}</span>${n[2] ? '<span class="absolute left-[31px] top-[5px] size-[6px] rounded-full bg-red-600"></span>' : ''}</a></li>`).join('');

$('components').innerHTML = ['WKL1  <2>','WKL4a  <1>','WKL3a  <1>','WKL1a  <1>','WKL2a  <1>','WKL5  <2>','WKL1-1  <2>','*','L2  <2>','L3a  <2>','L2a  <1>','L3a-1  <1>','L1a  <1>','L1  <1>'].map(c =>
  c === '*' ? `<li class="flex h-6 items-center gap-1 pl-[6px]">${caret}非框架梁</li>`
  : `<li class="flex h-6 items-center pl-[21px]"><span class="flex h-[21px] items-center pl-[3px] ${c === 'L3a  <2>' ? 'w-[81px] rounded-sm bg-[#c2d9f2]' : ''}">${c.replace('<', '&lt;')}</span></li>`).join('');

$('props').innerHTML = [['截面面积(m²)','0.08',1],['起点顶标高(...','26.4',1],['终点顶标高(...','26.4',1],['备注','',1],['*'],['其它钢筋','195,1',0],['其它箍筋','',1],['保护层厚度(...','(20)',1],['钢筋汇总信息','(梁)',1],['抗震等级','(非抗震)',1],['锚固搭接','按默认锚固搭接计算',0],['计算设置','按默认计算设置计算',0],['节点设置','按默认节点设置计算',0]].map(([l, v, d]) => {
  if (l === '*') return `<tr class="h-[25px]"><td colspan="3" class="p-0"><div class="flex h-6 items-center gap-[7px] bg-[#ececec] pl-[9px]">${caret}钢筋业务...</div></td></tr>`;
  const link = l === '其它钢筋' || l === '其它箍筋' || l === '截面面积(m²)';
  const active = l === '其它钢筋';
  return `<tr class="h-[25px]"><td class="whitespace-nowrap p-0 pb-px pl-[15px] ${link ? 'text-[#1a5cf0]' : ''}">${l}</td><td class="relative p-0"><input aria-label="${l}" value="${v}" class="block h-[21px] w-[123px] border ${active ? 'border-[#4f84cf] pl-1 text-[#555]' : v === '0.08' ? 'border-[#dcdcdc] pl-[2px] text-[#8f8f8f]' : 'border-[#dcdcdc] pl-[2px]'}">${active ? '<button aria-label="编辑其它钢筋" class="absolute right-[5px] top-[5px] flex h-[14px] w-4 items-center justify-center rounded-xs border border-[#3c8df0] bg-[#e8f2ff]"><svg class="h-[2px] w-[10px]" viewBox="0 0 10 2" fill="#1d74e8"><path d="M0 0h2v2H0zM4 0h2v2H4zM8 0h2v2H8z"/></svg></button>' : ''}</td><td class="p-0 pb-[2px]">${d ? '<span class="mx-auto block size-2 rounded-full border border-[#b5b5b5] bg-[#dcdcdc]"></span>' : ''}</td></tr>`;
}).join('');

const layers = ['#图元','柱','构造柱','砌体柱','约束边缘','*墙','剪力墙','人防门','砌体墙','砌体加筋','保温墙','暗梁','墙垛','幕墙','*门窗洞','门','窗','门联窗','墙洞','带形窗','带形洞','飘窗','老虎窗','过梁','壁龛','*梁','梁','连梁','圈梁','*板','现浇板','螺旋板','坡道','柱帽'];
$('layers').innerHTML = layers.map((t, i) => {
  if (t[0] === '#') return `<li class="flex h-[22px] items-center border-y border-[#dadada] pl-10">${t.slice(1)}</li>`;
  if (t[0] === '*') return `<li class="flex h-[21px] items-center border-b border-[#dadada]"><span class="h-full w-2 border-r border-[#dadada]"></span><button aria-label="折叠${t.slice(1)}" class="ml-[3px] mr-[6px] grid size-[13px] place-items-center rounded-xs border border-[#777]"><span class="h-px w-[5px] bg-[#333]"></span></button>${t.slice(1)}</li>`;
  const last = !layers[i + 1] || layers[i + 1][0] === '*';
  return `<li class="flex h-[21px] items-center border-b border-[#dadada]"><span class="h-full w-2 border-r border-[#dadada]"></span><svg class="h-[21px] w-8 shrink-0" viewBox="0 0 32 21" fill="none" stroke="#dadada"><path d="${last && layers[i + 1] ? 'M9.500 0v10.500h16' : 'M9.500 0v21M9.500 10.500h16'}"/></svg>${t}</li>`;
}).join('');

// Plan drawing: grid axes, dimensions, slab and beams
const cols = [[475.5,'3'],[672.5,'4'],[868.5,'5'],[1065.5,'6'],[1240,'7'],[1259.5,'8'],[1456,'9']];
const line = (x1, y1, x2, y2, c, w = 1) => `<path d="M${x1} ${y1}L${x2} ${y2}" stroke="${c}" stroke-width="${w}"/>`;
const bubble = (x, y, t) => {
  const p = [0,1,2,3,4,5,6,7,8,9].map(k => (x + 12 * Math.sin(k * Math.PI / 5)).toFixed(1) + ',' + (y - 12 * Math.cos(k * Math.PI / 5)).toFixed(1)).join(' ');
  return `<polygon points="${p}" fill="none" stroke="#008800"/><text x="${x}" y="${y + 7}" text-anchor="middle" font-size="18" fill="#fff">${t}</text>`;
};
let s = '<rect x="475" y="575" width="197" height="184" fill="#666"/>';
s += [[472,575,7,184],[472,575,204,8],[472,751,204,8],[570,575,7,184],[668,575,8,184]].map(r => `<rect x="${r[0]}" y="${r[1]}" width="${r[2]}" height="${r[3]}" fill="#2be02b"/>`).join('');
s += line(413,297.5,1631,297.5,'#700000') + line(413,300,1631,300,'#004800',2) + line(413,339.5,1631,339.5,'#007000');
[423.5,483.5,488.5,543.5].forEach(y => s += line(413,y,1631,y,'#780000'));
[573.5,770.5,956.5,1125.5,1153.5,1357.5,1554.5].forEach(x => s += line(x,378,x,955,'#680000'));
s += line(437,378.5,1631,378.5,'#e00000') + line(437,575.5,1607,575.5,'#d80000') + line(413,759,1631,759,'#800000',2) + line(413,955.5,1631,955.5,'#f00');
cols.forEach(([x, t], i) => {
  s += line(x,260,x,378,'#007000') + line(x,378,x,955, i === 1 || i > 3 ? '#a00000' : '#e00000', i === 1 || i > 3 ? 2 : 1) + line(x,955,x,967,'#006000');
  s += line(x - 4,343,x + 4,335,'#008800') + bubble(x,249,t) + bubble(x,955,t);
});
[[770.5,'1/4'],[956.5,'1/5'],[1125.5,'1/6'],[1153.5,'1/6']].forEach(([x, t]) => s += bubble(x,955,t));
[[378,'D'],[575,'C'],[759,'B'],[955,'A']].forEach(([y, t]) => s += bubble(425,y,t) + bubble(1619,y,t));
[[574,320,'7500'],[770,320,'7500'],[967,320,'7500'],[1153,320,'6650'],[1249,320,'740'],[1357.5,320,'7500'],[1554.5,320,'7500'],[1261,280,'89890']].forEach(([x, y, t]) =>
  s += `<text x="${x}" y="${y + 7}" text-anchor="middle" font-size="18" fill="#fff">${t}</text>`);
[[467,567],[467,751],[664,751]].forEach(([x, y]) => s += `<rect x="${x}" y="${y}" width="16" height="16" fill="#8a00ff"/>`);
s += '<path d="M475.500 567v16M475.500 751v16M467 759h16M672.500 751v16M664 759h16" stroke="#c00040" stroke-width=".8"/>';
s += '<path d="M463 916V892" stroke="#0f0" stroke-width="4"/><path d="M457.500 899l5.500-12 5.500 12z" fill="#0f0"/><path d="M464 917h20" stroke="#f00" stroke-width="4"/><path d="M481 911.500l12 5.500-12 5.500z" fill="#f00"/><circle cx="463" cy="917" r="5.500" fill="#0000c0"/><text x="463" y="887" text-anchor="middle" font-size="16" fill="#0f0">Y</text><text x="499" y="923" text-anchor="middle" font-size="16" fill="#f00">X</text>';
$('plan').innerHTML = s;
</script>
</body>
</html>
